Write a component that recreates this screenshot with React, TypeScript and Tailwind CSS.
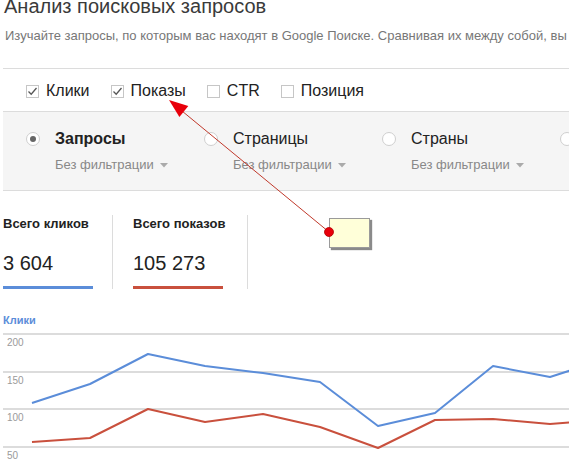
import React from "react";

const METRICS = [
  { label: "Клики", checked: true },
  { label: "Показы", checked: true },
  { label: "CTR", checked: false },
  { label: "Позиция", checked: false },
];

const GROUPS = [
  { label: "Запросы", active: true },
  { label: "Страницы", active: false },
  { label: "Страны", active: false },
  { label: "Устройства", active: false },
];

const BLUE = [
  [32, 403], [90, 384], [148, 354], [205, 366], [263, 373], [320, 382],
  [378, 426], [435, 413], [493, 366], [550, 377], [575, 369],
];
const RED = [
  [32, 442], [90, 438], [148, 409], [205, 422], [263, 414], [320, 427],
  [378, 448], [435, 420], [493, 419], [550, 424], [575, 422],
];

const GRID = [
  { y: 334, label: "200" },
  { y: 372, label: "150" },
  { y: 409, label: "100" },
  { y: 447, label: "50" },
];

function Checkbox({ checked }: { checked: boolean }) {
  return (
    <span className="w-[13px] h-[13px] border border-[#c6c6c6] bg-white flex items-center justify-center">
      {checked && (
        <svg width="11" height="11" viewBox="0 0 11 11">
          <path d="M1.5 5.5 L4.2 8.2 L9.5 2" fill="none" stroke="#555" strokeWidth="1.3" />
        </svg>
      )}
    </span>
  );
}

function Radio({ active }: { active: boolean }) {
  return (
    <span className="mt-[3px] w-[14px] h-[14px] shrink-0 rounded-full border border-[#cfcfcf] bg-white flex items-center justify-center">
      {active && <span className="w-[6px] h-[6px] rounded-full bg-[#666]" />}
    </span>
  );
}

function pts(list: number[][]) {
  return list.map((p) => p.join(",")).join(" ");
}

export default function App() {
  return (
    <div className="relative w-[569px] h-[464px] overflow-hidden bg-white font-['Liberation_Sans',Arial,sans-serif]">
      <div className="pl-[3px]">
        <h1 className="-mt-[4px] pl-[1px] text-[20px] leading-[20px] text-[#3a3a3a] whitespace-nowrap">
          Анализ поисковых запросов
        </h1>
        <p className="mt-[12px] pl-[2px] text-[13px] leading-[16px] text-[#777] whitespace-nowrap">
          Изучайте запросы, по которым вас находят в Google Поиске. Сравнивая их между собой, вы можете
        </p>

        <div className="mt-[24px] h-[44px] w-[620px] border-y border-[#dcdcdc] flex items-center gap-[21px] pl-[23px] pt-[2px]">
          {METRICS.map((m) => (
            <label key={m.label} className="flex items-center gap-[7px] text-[16px] text-[#222]">
              <Checkbox checked={m.checked} />
              {m.label}
            </label>
          ))}
        </div>

        <div className="w-[620px] bg-[#f5f5f5] border-b border-[#dcdcdc] pt-[17px] pb-[17px] pl-[23px] flex">
          {GROUPS.map((g) => (
            <div key={g.label} className="w-[178px] shrink-0 flex gap-[15px]">
              <Radio active={g.active} />
              <div>
                <div className={`text-[16px] leading-[20px] text-[#222] whitespace-nowrap ${g.active ? "font-bold" : ""}`}>
                  {g.label}
                </div>
                <div className="mt-[8px] flex items-center gap-[6px] text-[13px] leading-[16px] text-[#888] whitespace-nowrap">
                  Без фильтрации
                  <svg width="8" height="5" viewBox="0 0 8 5">
                    <path d="M0 0 H8 L4 4.5 Z" fill="#aaa" />
                  </svg>
                </div>
              </div>
            </div>
          ))}
        </div>

        <div className="mt-[24px] flex">
          <div className="w-[110px] border-r border-[#dcdcdc] pt-[1px]">
            <div className="text-[13px] leading-[16px] font-bold text-[#222]">Всего кликов</div>
            <div className="mt-[19px] text-[20px] leading-[24px] text-[#222]">3 604</div>
            <div className="mt-[11px] w-[90px] h-[3px] bg-[#5b8dd9]" />
          </div>
          <div className="w-[135px] border-r border-[#dcdcdc] pt-[1px] pl-[20px]">
            <div className="text-[13px] leading-[16px] font-bold text-[#222]">Всего показов</div>
            <div className="mt-[19px] text-[20px] leading-[24px] text-[#222]">105 273</div>
            <div className="mt-[11px] w-[90px] h-[3px] bg-[#c9503d]" />
          </div>
        </div>

        <div className="mt-[24px] text-[11px] leading-[14px] font-bold text-[#5b8dd9]">Клики</div>

        <svg width="566" height="137" viewBox="3 327 566 137" className="block">
          {GRID.map((g) => (
            <g key={g.label}>
              <line x1="3" x2="569" y1={g.y} y2={g.y} stroke="#dcdcdc" strokeWidth="2" />
              <text x="7" y={g.y + 11.5} fontSize="10" fill="#9a9a9a" fontFamily="Liberation Sans, Arial, sans-serif">
                {g.label}
              </text>
            </g>
          ))}
          <polyline points={pts(BLUE)} fill="none" stroke="#5b8dd9" strokeWidth="2" strokeLinejoin="round" />
          <polyline points={pts(RED)} fill="none" stroke="#c9503d" strokeWidth="2" strokeLinejoin="round" />
        </svg>
      </div>

      <div className="absolute left-[329px] top-[218px] w-[41px] h-[30px] bg-[#ffffd9] border border-[#9a9a9a] shadow-[2px_2px_1px_#8a8a8a]" />

      <svg className="absolute left-0 top-0 pointer-events-none" width="569" height="464" viewBox="0 0 569 464">
        <line x1="329" y1="232" x2="182" y2="111" stroke="#c0392b" strokeWidth="1" />
        <polygon points="169,100 188.3,106.1 179.4,116.9" fill="#e8000b" />
        <circle cx="329" cy="232" r="4.5" fill="#e8000b" stroke="#b00000" strokeWidth="0.8" />
      </svg>
    </div>
  );
}
